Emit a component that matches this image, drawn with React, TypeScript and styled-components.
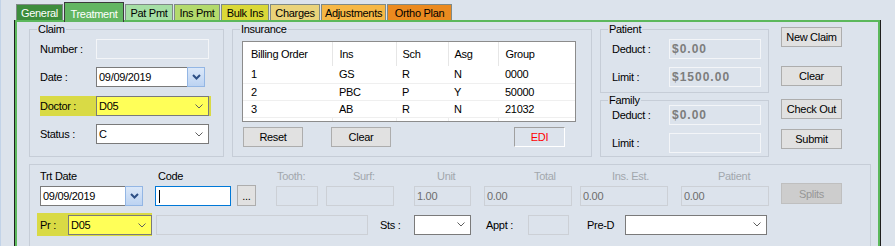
import styled, { createGlobalStyle } from 'styled-components';

const GlobalStyle = createGlobalStyle`
  * {
    box-sizing: border-box;
  }
  body {
    margin: 0;
    background: #dce3ec;
    font-family: 'Liberation Sans', Arial, sans-serif;
    font-size: 11px;
    letter-spacing: -0.3px;
    color: #000;
  }
`;

const tabs = [
  { title: 'General', width: 47, bg: '#3d8d3d', fg: '#fff' },
  { title: 'Treatment', width: 60, bg: '#62b662', fg: '#fff', active: true },
  { title: 'Pat Pmt', width: 48, bg: '#a5dfa5', fg: '#000' },
  { title: 'Ins Pmt', width: 46, bg: '#b3da6c', fg: '#000' },
  { title: 'Bulk Ins', width: 48, bg: '#dad838', fg: '#000' },
  { title: 'Charges', width: 50, bg: '#ead37a', fg: '#000' },
  { title: 'Adjustments', width: 65, bg: '#f6b745', fg: '#000' },
  { title: 'Ortho Plan', width: 65, bg: '#eb8a1f', fg: '#000' },
];

const insurance = [
  { order: '1', ins: 'GS', sch: 'R', asg: 'N', group: '0000' },
  { order: '2', ins: 'PBC', sch: 'P', asg: 'Y', group: '50000' },
  { order: '3', ins: 'AB', sch: 'R', asg: 'N', group: '21032' },
];

const columns = [
  { title: 'Billing Order', width: 89, pad: 8 },
  { title: 'Ins', width: 64, pad: 7 },
  { title: 'Sch', width: 52, pad: 6 },
  { title: 'Asg', width: 50, pad: 6 },
  { title: 'Group', width: 77, pad: 7 },
];

function ComboChevron() {
  return (
    <svg width="8" height="5" viewBox="0 0 8 5">
      <path d="M0.5 0.5 L4 4 L7.5 0.5" stroke="#5f5f5f" strokeWidth="1" fill="none" />
    </svg>
  );
}

function DateChevron() {
  return (
    <svg width="9" height="6" viewBox="0 0 9 6">
      <path d="M1 1 L4.5 4.5 L8 1" stroke="#2d4f86" strokeWidth="2" fill="none" />
    </svg>
  );
}

function Combo({ width, value, bg }: { width: number; value?: string; bg?: string }) {
  return (
    <ComboBox $w={width} $bg={bg || '#fff'}>
      <span>{value}</span>
      <ComboChevron />
    </ComboBox>
  );
}

function DatePicker({ width, value }: { width: number; value: string }) {
  return (
    <StyledDate>
      <DateText $w={width}>{value}</DateText>
      <DateButton>
        <DateChevron />
      </DateButton>
    </StyledDate>
  );
}

function App() {
  return (
    <>
      <GlobalStyle />
      <Screen>
        <TabBar>
          {tabs.map((tab) => (
            <Tab key={tab.title} $w={tab.width} $bg={tab.bg} $fg={tab.fg} $active={!!tab.active}>
              {tab.title}
            </Tab>
          ))}
        </TabBar>

        <Panel>
          <TopSection>
            <GroupBox $w={195} $h={134}>
              <Legend>Claim</Legend>
              <FieldStack $top={3} $left={10}>
                <FieldRow>
                  <FieldLabel $w={56}>Number :</FieldLabel>
                  <TextBox $w={113} $disabled $edge="#f3f5f8" />
                </FieldRow>
                <FieldRow $mt={8}>
                  <FieldLabel $w={56}>Date :</FieldLabel>
                  <DatePicker width={91} value="09/09/2019" />
                </FieldRow>
                <FieldRow $mt={9} $hl>
                  <FieldLabel $w={56}>Doctor :</FieldLabel>
                  <Combo width={113} value="D05" bg="#ffff58" />
                </FieldRow>
                <FieldRow $mt={8}>
                  <FieldLabel $w={56}>Status :</FieldLabel>
                  <Combo width={113} value="C" />
                </FieldRow>
              </FieldStack>
            </GroupBox>

            <GroupBox $w={360} $h={134} $ml={8}>
              <Legend>Insurance</Legend>
              <FieldStack $top={5} $left={9}>
                <GridFrame>
                  <InsTable>
                    <colgroup>
                      {columns.map((col) => (
                        <col key={col.title} style={{ width: col.width }} />
                      ))}
                    </colgroup>
                    <thead>
                      <tr>
                        {columns.map((col) => (
                          <HeadCell key={col.title} $pad={col.pad}>
                            {col.title}
                          </HeadCell>
                        ))}
                      </tr>
                    </thead>
                    <tbody>
                      {insurance.map((row) => (
                        <tr key={row.order}>
                          <BodyCell $pad={8}>{row.order}</BodyCell>
                          <BodyCell $pad={7}>{row.ins}</BodyCell>
                          <BodyCell $pad={6}>{row.sch}</BodyCell>
                          <BodyCell $pad={6}>{row.asg}</BodyCell>
                          <BodyCell $pad={7}>{row.group}</BodyCell>
                        </tr>
                      ))}
                      <tr>
                        {columns.map((col, index) => (
                          <EmptyCell key={col.title} $first={index === 0} />
                        ))}
                      </tr>
                    </tbody>
                  </InsTable>
                </GridFrame>
                <ButtonRow>
                  <Button $w={60}>Reset</Button>
                  <Button $w={60} $ml={28}>
                    Clear
                  </Button>
                  <EdiBox>EDI</EdiBox>
                </ButtonRow>
              </FieldStack>
            </GroupBox>

            <SideColumn>
              <GroupBox $w={169} $h={70}>
                <Legend>Patient</Legend>
                <FieldStack $top={3} $left={11}>
                  <FieldRow>
                    <FieldLabel $w={57}>Deduct :</FieldLabel>
                    <TextBox $w={92} $disabled $edge="#f3f5f8">
                      <Amount>$0.00</Amount>
                    </TextBox>
                  </FieldRow>
                  <FieldRow $mt={8}>
                    <FieldLabel $w={57}>Limit :</FieldLabel>
                    <TextBox $w={92} $disabled $edge="#f3f5f8">
                      <Amount>$1500.00</Amount>
                    </TextBox>
                  </FieldRow>
                </FieldStack>
              </GroupBox>
              <GroupBox $w={169} $h={63} $mt={1}>
                <Legend>Family</Legend>
                <FieldStack $top={-2} $left={11}>
                  <FieldRow>
                    <FieldLabel $w={57}>Deduct :</FieldLabel>
                    <TextBox $w={92} $disabled $edge="#f3f5f8">
                      <Amount>$0.00</Amount>
                    </TextBox>
                  </FieldRow>
                  <FieldRow $mt={8}>
                    <FieldLabel $w={57}>Limit :</FieldLabel>
                    <TextBox $w={92} $disabled $edge="#f3f5f8" />
                  </FieldRow>
                </FieldStack>
              </GroupBox>
            </SideColumn>

            <ActionColumn>
              <Button $w={61} $mt={4}>
                New Claim
              </Button>
              <Button $w={61} $mt={19}>
                Clear
              </Button>
              <Button $w={61} $mt={13}>
                Check Out
              </Button>
              <Button $w={61} $mt={10}>
                Submit
              </Button>
            </ActionColumn>
          </TopSection>

          <EntryBox>
            <EntryRow>
              <EntryCol $w={103}>
                <ColLabel>Trt Date</ColLabel>
                <DatePicker width={86} value="09/09/2019" />
              </EntryCol>
              <EntryCol $w={76} $ml={12}>
                <ColLabel $indent={3}>Code</ColLabel>
                <TextBox $w={76} $focus>
                  <Caret />
                </TextBox>
              </EntryCol>
              <EntryCol $w={19} $ml={6}>
                <ColLabel />
                <Button $w={19} $h={21} $mt={-1}>
                  ...
                </Button>
              </EntryCol>
              <EntryCol $w={42} $ml={20}>
                <ColLabel $indent={1} $disabled>
                  Tooth:
                </ColLabel>
                <TextBox $w={42} $disabled />
              </EntryCol>
              <EntryCol $w={68} $ml={8}>
                <ColLabel $indent={27} $disabled>
                  Surf:
                </ColLabel>
                <TextBox $w={68} $disabled />
              </EntryCol>
              <EntryCol $w={57} $ml={20}>
                <ColLabel $indent={23} $disabled>
                  Unit
                </ColLabel>
                <TextBox $w={57} $disabled>
                  1.00
                </TextBox>
              </EntryCol>
              <EntryCol $w={88} $ml={13}>
                <ColLabel $indent={50} $disabled>
                  Total
                </ColLabel>
                <TextBox $w={88} $disabled>
                  0.00
                </TextBox>
              </EntryCol>
              <EntryCol $w={88} $ml={8}>
                <ColLabel $indent={32} $disabled>
                  Ins. Est.
                </ColLabel>
                <TextBox $w={88} $disabled>
                  0.00
                </TextBox>
              </EntryCol>
              <EntryCol $w={88} $ml={13}>
                <ColLabel $indent={37} $disabled>
                  Patient
                </ColLabel>
                <TextBox $w={88} $disabled>
                  0.00
                </TextBox>
              </EntryCol>
              <EntryCol $w={61} $ml={12}>
                <ColLabel />
                <SplitsButton>Splits</SplitsButton>
              </EntryCol>
            </EntryRow>

            <ProviderRow>
              <Highlight>
                <FieldLabel $w={28}>Pr :</FieldLabel>
                <Combo width={84} value="D05" bg="#ffff58" />
              </Highlight>
              <TextBox $w={212} $ml={4} $disabled />
              <FieldLabel $w={34} $ml={12}>
                Sts :
              </FieldLabel>
              <Combo width={57} />
              <FieldLabel $w={42} $ml={15}>
                Appt :
              </FieldLabel>
              <TextBox $w={41} $disabled />
              <FieldLabel $w={38} $ml={18}>
                Pre-D
              </FieldLabel>
              <Combo width={142} />
            </ProviderRow>
          </EntryBox>
        </Panel>
      </Screen>
    </>
  );
}

export default App;

const Screen = styled.div`
  width: 895px;
  height: 246px;
  overflow: hidden;
  padding-left: 15px;
  box-shadow: inset 1px 0 0 #c2d3e8;
`;

const TabBar = styled.div`
  display: flex;
  align-items: flex-end;
  height: 20px;
  padding-left: 1px;
`;

const Tab = styled.div<{ $w: number; $bg: string; $fg: string; $active: boolean }>`
  position: relative;
  z-index: ${(p) => (p.$active ? 2 : 0)};
  display: flex;
  align-items: center;
  justify-content: center;
  width: ${(p) => p.$w}px;
  height: ${(p) => (p.$active ? 20 : 16)}px;
  margin-right: 1px;
  margin-bottom: ${(p) => (p.$active ? -2 : 0)}px;
  padding-top: ${(p) => (p.$active ? 3 : 0)}px;
  border: 1px solid ${(p) => (p.$active ? '#3a3a3a' : '#7f8a86')};
  border-bottom: none;
  background: ${(p) => p.$bg};
  color: ${(p) => p.$fg};
  white-space: nowrap;
`;

const Panel = styled.div`
  width: 865px;
  height: 240px;
  padding: 1px 0 0 12px;
  border: 2px solid #5cb85c;
  box-shadow: -1px 0 0 #1e1e1e, 1px 0 0 #1e1e1e;
`;

const TopSection = styled.div`
  display: flex;
  align-items: flex-start;
  height: 134px;
`;

const GroupBox = styled.fieldset<{ $w: number; $h: number; $ml?: number; $mt?: number }>`
  width: ${(p) => p.$w}px;
  height: ${(p) => p.$h}px;
  min-width: 0;
  margin: ${(p) => p.$mt || 0}px 0 0 ${(p) => p.$ml || 0}px;
  padding: 0;
  border: 1px solid #c6cdd7;
`;

const Legend = styled.legend`
  margin-left: 7px;
  padding: 0 1px;
  line-height: 13px;
`;

const FieldStack = styled.div<{ $top: number; $left: number }>`
  display: flex;
  flex-direction: column;
  margin-top: ${(p) => p.$top}px;
  padding-left: ${(p) => p.$left}px;
`;

const FieldRow = styled.div<{ $mt?: number; $hl?: boolean }>`
  display: flex;
  align-items: center;
  align-self: flex-start;
  height: 20px;
  margin-top: ${(p) => p.$mt || 0}px;
  padding-right: ${(p) => (p.$hl ? 2 : 0)}px;
  background: ${(p) => (p.$hl ? '#d9da45' : 'transparent')};
`;

const FieldLabel = styled.span<{ $w: number; $ml?: number }>`
  flex: none;
  width: ${(p) => p.$w}px;
  margin-left: ${(p) => p.$ml || 0}px;
  white-space: nowrap;
`;

const TextBox = styled.div<{ $w: number; $ml?: number; $disabled?: boolean; $focus?: boolean; $edge?: string }>`
  display: flex;
  align-items: center;
  flex: none;
  width: ${(p) => p.$w}px;
  height: 20px;
  margin-left: ${(p) => p.$ml || 0}px;
  padding-left: 2px;
  border: 1px solid
    ${(p) => (p.$focus ? '#0078d7' : p.$disabled ? p.$edge || '#ccd0d6' : '#7a7a7a')};
  background: ${(p) => (p.$disabled ? 'transparent' : '#fff')};
  color: ${(p) => (p.$disabled ? '#6d6d6d' : '#000')};
`;

const Amount = styled.span`
  font-weight: bold;
  font-size: 12px;
  letter-spacing: 1px;
  color: #7d7d7d;
`;

const Caret = styled.span`
  width: 1px;
  height: 13px;
  margin-left: 1px;
  background: #000;
`;

const ComboBox = styled.div<{ $w: number; $bg: string }>`
  display: flex;
  align-items: center;
  justify-content: space-between;
  flex: none;
  width: ${(p) => p.$w}px;
  height: 20px;
  padding: 0 5px 0 2px;
  border: 1px solid #7a7a7a;
  background: ${(p) => p.$bg};
`;

const StyledDate = styled.div`
  display: flex;
  flex: none;
`;

const DateText = styled.div<{ $w: number }>`
  display: flex;
  align-items: center;
  width: ${(p) => p.$w}px;
  height: 20px;
  padding-left: 2px;
  border: 1px solid #7a7a7a;
  border-right: none;
  background: #fff;
`;

const DateButton = styled.div`
  display: flex;
  align-items: center;
  justify-content: center;
  width: 18px;
  height: 20px;
  border: 1px solid #93b6e4;
  background: linear-gradient(#dbe8f9, #bcd3f2);
`;

const GridFrame = styled.div`
  width: 334px;
  height: 81px;
  overflow: hidden;
  border: 1px solid #8c8c8c;
  background: #fff;
`;

const InsTable = styled.table`
  width: 332px;
  border-collapse: collapse;
  table-layout: fixed;
`;

const HeadCell = styled.th<{ $pad: number }>`
  height: 24px;
  padding: 0 0 0 ${(p) => p.$pad}px;
  border-right: 1px solid #e6e6e6;
  font-weight: normal;
  text-align: left;
  white-space: nowrap;
`;

const BodyCell = styled.td<{ $pad: number }>`
  height: 17px;
  padding: 0 0 0 ${(p) => p.$pad}px;
  border-bottom: 1px solid #efefef;
  white-space: nowrap;
`;

const EmptyCell = styled.td<{ $first: boolean }>`
  height: 17px;
  padding: 0;
  border-left: ${(p) => (p.$first ? 'none' : '1px solid #ececec')};
`;

const ButtonRow = styled.div`
  display: flex;
  margin-top: 5px;
  padding-left: 1px;
`;

const Button = styled.div<{ $w: number; $h?: number; $ml?: number; $mt?: number }>`
  display: flex;
  align-items: center;
  justify-content: center;
  flex: none;
  width: ${(p) => p.$w}px;
  height: ${(p) => p.$h || 20}px;
  margin: ${(p) => p.$mt || 0}px 0 0 ${(p) => p.$ml || 0}px;
  border: 1px solid #adadad;
  background: #e1e1e1;
  white-space: nowrap;
`;

const EdiBox = styled.div`
  display: flex;
  align-items: center;
  justify-content: center;
  width: 51px;
  height: 20px;
  margin-left: 123px;
  border: 1px solid;
  border-color: #a0a0a0 #fff #fff #a0a0a0;
  color: #ff0000;
`;

const SideColumn = styled.div`
  display: flex;
  flex-direction: column;
  margin-left: 8px;
`;

const ActionColumn = styled.div`
  display: flex;
  flex-direction: column;
  margin-left: 12px;
`;

const EntryBox = styled.fieldset`
  width: 842px;
  height: 100px;
  min-width: 0;
  margin: 7px 0 0;
  padding: 5px 0 0 10px;
  border: 1px solid #c6cdd7;
`;

const EntryRow = styled.div`
  display: flex;
  align-items: flex-start;
`;

const EntryCol = styled.div<{ $w: number; $ml?: number }>`
  display: flex;
  flex-direction: column;
  gap: 3px;
  flex: none;
  width: ${(p) => p.$w}px;
  margin-left: ${(p) => p.$ml || 0}px;
`;

const ColLabel = styled.span<{ $indent?: number; $disabled?: boolean }>`
  height: 13px;
  line-height: 13px;
  padding-left: ${(p) => p.$indent || 0}px;
  color: ${(p) => (p.$disabled ? '#a2a7ad' : '#000')};
  white-space: nowrap;
`;

const SplitsButton = styled.div`
  display: flex;
  align-items: center;
  justify-content: center;
  width: 61px;
  height: 21px;
  margin-top: -3px;
  border: 1px solid #bfbfbf;
  background: #cdcdcd;
  color: #979797;
`;

const ProviderRow = styled.div`
  display: flex;
  align-items: center;
  height: 23px;
  margin: 7px 0 0 -3px;
`;

const Highlight = styled.div`
  display: flex;
  align-items: center;
  height: 23px;
  padding: 1px 0 0 3px;
  background: #d9da45;
`;
